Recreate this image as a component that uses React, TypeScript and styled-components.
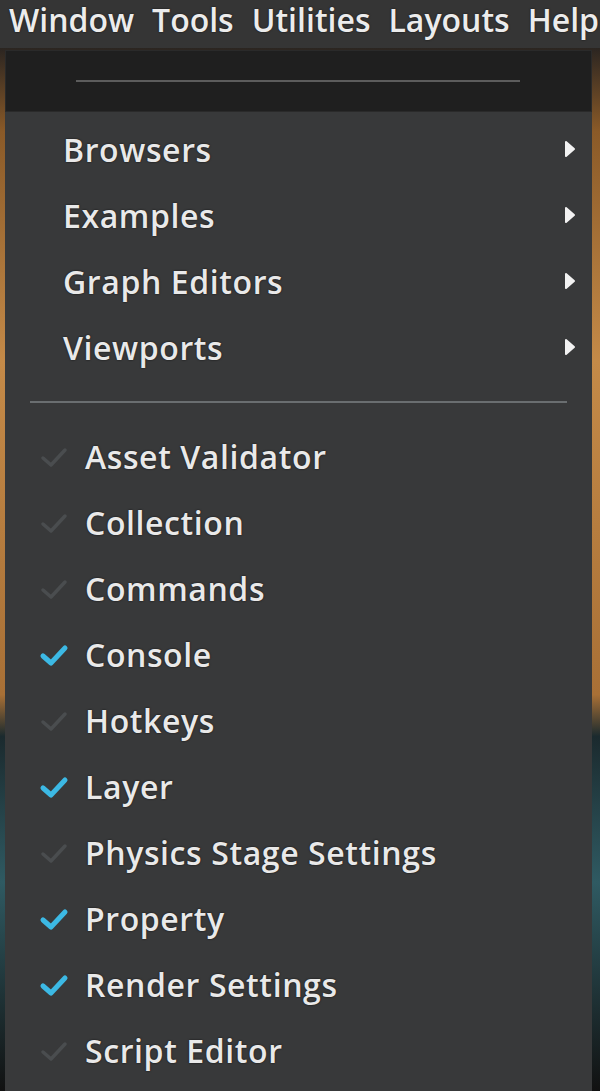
import styled, { createGlobalStyle } from "styled-components";

const GlobalStyle = createGlobalStyle`
  html, body {
    margin: 0;
    padding: 0;
    background: #2a2522;
  }
  * {
    box-sizing: border-box;
  }
`;

const Screen = styled.div`
  width: 600px;
  height: 1091px;
  overflow: hidden;
  display: flex;
  flex-direction: column;
  font-family: "Open Sans", "DejaVu Sans", sans-serif;
  background: #343434;
`;

const MenuBar = styled.div`
  height: 48px;
  flex-shrink: 0;
  display: flex;
  align-items: flex-start;
  gap: 18px;
  padding-left: 9px;
  background: #353535;
  white-space: nowrap;
  overflow: hidden;
`;

const BarItem = styled.span`
  font-size: 32px;
  font-weight: 600;
  color: #ececec;
  line-height: 40px;
  text-shadow: 0 0 2px rgba(0, 0, 0, 0.7);
`;

const Workspace = styled.div`
  flex: 1;
  display: flex;
  padding-top: 2px;
  background: linear-gradient(
    180deg,
    #2b2521 0%,
    #8a5a28 8%,
    #c48a48 30%,
    #a87036 62%,
    #1b2a2e 66%,
    #2f5a62 80%,
    #111 100%
  );
`;

const LeftEdge = styled.div`
  width: 5px;
  flex-shrink: 0;
`;

const Menu = styled.div`
  width: 587px;
  flex-shrink: 0;
  display: flex;
  flex-direction: column;
  background: #38393a;
`;

const TearOff = styled.div`
  height: 62px;
  display: flex;
  align-items: center;
  padding-left: 70px;
  background: #1f1f1f;
  border: 1px solid #2a2a2a;
`;

const TearLine = styled.div`
  width: 444px;
  height: 2px;
  margin-top: -1px;
  background: #5c5c5c;
`;

const Section = styled.div<{ $top?: number }>`
  display: flex;
  flex-direction: column;
  padding-top: ${(p) => p.$top ?? 0}px;
`;

const Item = styled.div<{ $indent: number }>`
  height: 66px;
  display: flex;
  align-items: center;
  padding-left: ${(p) => p.$indent}px;
  padding-right: 16px;
`;

const Label = styled.span`
  flex: 1;
  font-size: 32px;
  font-weight: 600;
  color: #e9e9e9;
  letter-spacing: 0.6px;
  line-height: 1.2;
  white-space: nowrap;
  text-shadow: 0 0 2px rgba(0, 0, 0, 0.8);
`;

const Arrow = styled.svg`
  width: 12px;
  height: 18px;
  margin-bottom: 2px;
`;

const Check = styled.svg`
  width: 30px;
  height: 26px;
  margin-right: 16px;
  flex-shrink: 0;
`;

const Separator = styled.div`
  height: 2px;
  margin: 20px 25px 21px 25px;
  background: #6a6e70;
`;

const subMenus = ["Browsers", "Examples", "Graph Editors", "Viewports"];

const panels = [
  { name: "Asset Validator", on: false },
  { name: "Collection", on: false },
  { name: "Commands", on: false },
  { name: "Console", on: true },
  { name: "Hotkeys", on: false },
  { name: "Layer", on: true },
  { name: "Physics Stage Settings", on: false },
  { name: "Property", on: true },
  { name: "Render Settings", on: true },
  { name: "Script Editor", on: false },
];

function CheckMark({ on }: { on: boolean }) {
  return (
    <Check viewBox="0 0 30 26">
      <path
        d="M4 14 L12 21 L26 6"
        fill="none"
        stroke={on ? "#3cb9e4" : "#4a4d4f"}
        strokeWidth={on ? 5 : 3.5}
        strokeLinecap="round"
        strokeLinejoin="round"
      />
    </Check>
  );
}

export default function App() {
  return (
    <>
      <GlobalStyle />
      <Screen>
        <MenuBar>
          {["Window", "Tools", "Utilities", "Layouts", "Help"].map((t) => (
            <BarItem key={t}>{t}</BarItem>
          ))}
        </MenuBar>
        <Workspace>
          <LeftEdge />
          <Menu>
            <TearOff>
              <TearLine />
            </TearOff>
            <Section $top={5}>
              {subMenus.map((s) => (
                <Item key={s} $indent={58}>
                  <Label>{s}</Label>
                  <Arrow viewBox="0 0 12 18">
                    <path
                      d="M2 2 L10 9 L2 16 Z"
                      fill="#f2f2f2"
                      stroke="#f2f2f2"
                      strokeWidth={2}
                      strokeLinejoin="round"
                    />
                  </Arrow>
                </Item>
              ))}
            </Section>
            <Separator />
            <Section>
              {panels.map((p) => (
                <Item key={p.name} $indent={34}>
                  <CheckMark on={p.on} />
                  <Label>{p.name}</Label>
                </Item>
              ))}
            </Section>
          </Menu>
        </Workspace>
      </Screen>
    </>
  );
}
